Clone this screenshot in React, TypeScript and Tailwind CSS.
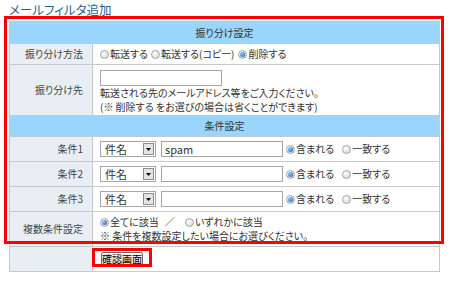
import { ReactElement } from 'react'

function Radio({ checked }: { checked?: boolean }): ReactElement {
  return (
    <span className="inline-flex shrink-0 items-center justify-center w-[9px] h-[9px] rounded-full border border-[#a8a8a8] bg-[radial-gradient(circle_at_35%_35%,#ffffff,#d0d0d0)] mr-[1px]">
      {checked && <span className="w-[5px] h-[5px] rounded-full bg-[radial-gradient(circle_at_35%_35%,#8ccaff,#0a5cb5)]" />}
    </span>
  )
}

function Select(): ReactElement {
  return (
    <span className="inline-flex items-center justify-between w-[56px] h-[16px] border border-[#a6a6a6] bg-white pl-[4px] pr-[1px]">
      <span className="leading-[14px] text-[11px]">件名</span>
      <span className="flex items-center justify-center w-[11px] h-[12px] border border-[#8c8c8c] bg-[#e4e4e4]">
        <svg width="5" height="3" viewBox="0 0 5 3">
          <path d="M0 0h5L2.5 3z" fill="#000" />
        </svg>
      </span>
    </span>
  )
}

function TextInput({ value }: { value?: string }): ReactElement {
  return (
    <span className="inline-block w-[122px] h-[16px] border border-[#a6a6a6] bg-white pl-[3px] text-[11px] leading-[14px] align-top">
      {value}
    </span>
  )
}

function Label({ children }: { children?: string }): ReactElement {
  return (
    <td className="w-[83px] border border-[#c8c8c8] bg-[#e8eef4] text-right pr-[9px] text-[#444]">
      {children}
    </td>
  )
}

function Condition({ label, value }: { label: string; value?: string }): ReactElement {
  return (
    <tr className="h-[25px]">
      <Label>{label}</Label>
      <td className="border border-[#c8c8c8] pl-[7px]">
        <div className="flex items-center">
          <Select />
          <span className="ml-[5px] flex">
            <TextInput value={value} />
          </span>
          <span className="ml-[3px] flex items-center">
            <Radio checked />
            <span>含まれる</span>
          </span>
          <span className="ml-[8px] flex items-center">
            <Radio />
            <span>一致する</span>
          </span>
        </div>
      </td>
    </tr>
  )
}

export default function App(): ReactElement {
  return (
    <div
      className="relative w-[450px] h-[286px] bg-white text-[10px] leading-[14px] text-[#333] [font-feature-settings:'palt']"
      style={{ fontFamily: '"Noto Sans CJK JP", "Noto Sans", sans-serif' }}
    >
      <div className="h-[21px] pl-[9px] pt-[2px] text-[12.5px] leading-[15px] text-[#2f5f8e]">
        メールフィルタ追加
      </div>
      <table className="ml-[9px] w-[431px] border-collapse">
        <tbody>
          <tr className="h-[22px]">
            <td colSpan={2} className="border border-[#c8c8c8] bg-[#99d5fc] text-center">
              振り分け設定
            </td>
          </tr>
          <tr className="h-[21px]">
            <Label>振り分け方法</Label>
            <td className="border border-[#c8c8c8] pl-[7px]">
              <div className="flex items-center">
                <Radio />
                <span>転送する</span>
                <span className="ml-[3px] flex"><Radio /></span>
                <span>転送する(コピー)</span>
                <span className="ml-[4px] flex"><Radio checked /></span>
                <span>削除する</span>
              </div>
            </td>
          </tr>
          <tr className="h-[51px]">
            <Label>振り分け先</Label>
            <td className="border border-[#c8c8c8] pl-[7px] pt-[4px] pb-[1px]">
              <TextInput />
              <div>転送される先のメールアドレス等をご入力ください。</div>
              <div>(※ 削除する をお選びの場合は省くことができます)</div>
            </td>
          </tr>
          <tr className="h-[21px]">
            <td colSpan={2} className="border border-[#c8c8c8] bg-[#99d5fc] text-center">
              条件設定
            </td>
          </tr>
          <Condition label="条件1" value="spam" />
          <Condition label="条件2" />
          <Condition label="条件3" />
          <tr className="h-[35px]">
            <Label>複数条件設定</Label>
            <td className="border border-[#c8c8c8] pl-[7px]">
              <div className="flex items-center">
                <Radio checked />
                <span>全てに該当</span>
                <span className="ml-[6px]">／</span>
                <span className="ml-[10px] flex"><Radio /></span>
                <span>いずれかに該当</span>
              </div>
              <div>※ 条件を複数設定したい場合にお選びください。</div>
            </td>
          </tr>
          <tr className="h-[25px]">
            <Label />
            <td className="border border-[#c8c8c8] pl-[8px]">
              <button className="block h-[14px] px-0 border border-[#6b6b6b] rounded-[2px] bg-[linear-gradient(#f6f6f6,#dcdcdc)] text-[10px] leading-[12px] text-black">
                確認画面
              </button>
            </td>
          </tr>
        </tbody>
      </table>
      <div className="absolute left-[4px] top-[16px] w-[440px] h-[228px] border-[3px] border-[#ff0000]" />
      <div className="absolute left-[92px] top-[248px] w-[60px] h-[19px] border-[3px] border-[#ff0000]" />
    </div>
  )
}
